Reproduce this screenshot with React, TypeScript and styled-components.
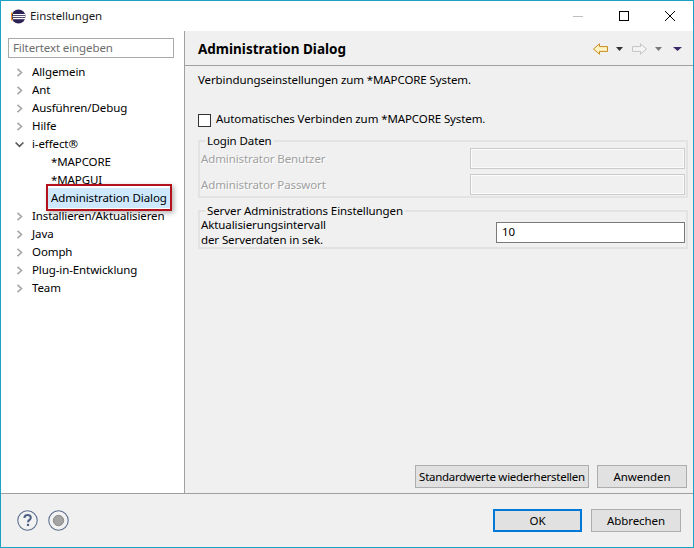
import styled, { createGlobalStyle } from "styled-components";

const UI_FONT = `"Noto Sans", "Open Sans", "Liberation Sans", sans-serif`;

const GlobalStyle = createGlobalStyle`
  html, body {
    margin: 0;
    padding: 0;
    background: #ffffff;
  }
  * {
    box-sizing: border-box;
  }
`;

const TREE = [
  { label: "Allgemein", indent: 0, arrow: "right" },
  { label: "Ant", indent: 0, arrow: "right" },
  { label: "Ausführen/Debug", indent: 0, arrow: "right" },
  { label: "Hilfe", indent: 0, arrow: "right" },
  { label: "i-effect®", indent: 0, arrow: "down" },
  { label: "*MAPCORE", indent: 1, arrow: "none" },
  { label: "*MAPGUI", indent: 1, arrow: "none" },
  { label: "Administration Dialog", indent: 1, arrow: "none", selected: true },
  { label: "Installieren/Aktualisieren", indent: 0, arrow: "right" },
  { label: "Java", indent: 0, arrow: "right" },
  { label: "Oomph", indent: 0, arrow: "right" },
  { label: "Plug-in-Entwicklung", indent: 0, arrow: "right" },
  { label: "Team", indent: 0, arrow: "right" },
];

function Chevron({ dir }: { dir: string }) {
  if (dir === "none") return <ChevronSlot />;
  return (
    <ChevronSlot>
      <svg width="9" height="9" viewBox="0 0 9 9" fill="none">
        {dir === "right" ? (
          <path d="M2.5 0.8 L6.5 4.5 L2.5 8.2" stroke="#a6a6a6" strokeWidth="1.6" />
        ) : (
          <path d="M0.6 2.5 L4.5 6.3 L8.4 2.5" stroke="#555555" strokeWidth="1.6" />
        )}
      </svg>
    </ChevronSlot>
  );
}

function EclipseLogo() {
  return (
    <svg width="15" height="15" viewBox="0 0 15 15">
      <circle cx="7.5" cy="7.5" r="7" fill="#2c2255" />
      <path d="M1.2 3.6 A7 7 0 0 0 1.2 11.4" stroke="#f7941e" strokeWidth="1.6" fill="none" />
      <rect x="2" y="5" width="12" height="1.2" fill="#ffffff" />
      <rect x="1.6" y="7" width="12.8" height="1.2" fill="#ffffff" />
      <rect x="2" y="9" width="12" height="1.2" fill="#ffffff" />
    </svg>
  );
}

function WindowControls() {
  return (
    <Controls>
      <ControlSlot>
        <svg width="10" height="10" viewBox="0 0 10 10">
          <rect x="0" y="5" width="10" height="1" fill="#bfbfbf" />
        </svg>
      </ControlSlot>
      <ControlSlot>
        <svg width="10" height="10" viewBox="0 0 10 10">
          <rect x="0.5" y="0.5" width="9" height="9" fill="none" stroke="#000000" />
        </svg>
      </ControlSlot>
      <ControlSlot>
        <svg width="10" height="10" viewBox="0 0 10 10">
          <path d="M0 0 L10 10 M10 0 L0 10" stroke="#000000" strokeWidth="1" />
        </svg>
      </ControlSlot>
    </Controls>
  );
}

function NavArrow({ back }: { back?: boolean }) {
  const d = "M0.5 6 L6.5 0.8 L6.5 3.6 L14.5 3.6 L14.5 8.4 L6.5 8.4 L6.5 11.2 Z";
  return (
    <svg width="15" height="12" viewBox="0 0 15 12">
      <path
        d={d}
        transform={back ? undefined : "matrix(-1 0 0 1 15 0)"}
        fill={back ? "#fff3c4" : "#f4f4f4"}
        stroke={back ? "#c98a1e" : "#c4c4c4"}
        strokeWidth="1"
      />
    </svg>
  );
}

function Caret({ color, width = 7 }: { color: string; width?: number }) {
  return (
    <svg width={width} height="4" viewBox={`0 0 ${width} 4`}>
      <path d={`M0 0 L${width} 0 L${width / 2} 4 Z`} fill={color} />
    </svg>
  );
}

function HelpIcon() {
  return (
    <svg width="21" height="21" viewBox="0 0 21 21">
      <circle cx="10.5" cy="10.5" r="9.7" fill="#f2f2f2" stroke="#5b6f8f" strokeWidth="1.1" />
      <path
        d="M7.4 8 C7.4 5.8 9 5 10.6 5 C12.4 5 13.8 6 13.8 7.7 C13.8 9.8 11 10 11 12.3"
        fill="none"
        stroke="#4d6185"
        strokeWidth="2"
      />
      <rect x="9.9" y="13.8" width="2.2" height="2.2" fill="#4d6185" />
    </svg>
  );
}

function RecordIcon() {
  return (
    <svg width="21" height="21" viewBox="0 0 21 21">
      <circle cx="10.5" cy="10.5" r="9.7" fill="#f2f2f2" stroke="#5b6f8f" strokeWidth="1.1" />
      <circle cx="10.5" cy="10.5" r="5.2" fill="#a3a3a3" stroke="#8c8c8c" />
    </svg>
  );
}

export default function App() {
  return (
    <>
      <GlobalStyle />
      <Window>
        <TitleBar>
          <TitleLogo>
            <EclipseLogo />
          </TitleLogo>
          <TitleText>Einstellungen</TitleText>
          <WindowControls />
        </TitleBar>

        <Body>
          <Sidebar>
            <FilterInput placeholder="Filtertext eingeben" readOnly />
            <Tree>
              {TREE.map((item) => (
                <TreeRow key={item.label} $indent={item.indent}>
                  <Chevron dir={item.arrow} />
                  <TreeLabel $selected={item.selected}>{item.label}</TreeLabel>
                  {item.selected && <Callout />}
                </TreeRow>
              ))}
            </Tree>
          </Sidebar>

          <Main>
            <Header>
              <HeaderTitle>Administration Dialog</HeaderTitle>
              <HeaderTools>
                <ToolPair>
                  <NavArrow back />
                  <Caret color="#333333" />
                </ToolPair>
                <ToolPair>
                  <NavArrow />
                  <Caret color="#7a7a7a" />
                </ToolPair>
                <ViewMenu>
                  <Caret color="#3b2a6b" width={9} />
                </ViewMenu>
              </HeaderTools>
            </Header>

            <Content>
              <Description>Verbindungseinstellungen zum *MAPCORE System.</Description>

              <CheckRow>
                <CheckBox />
                <CheckText>Automatisches Verbinden zum *MAPCORE System.</CheckText>
              </CheckRow>

              <LoginGroup>
                <GroupLegend>Login Daten</GroupLegend>
                <FieldRow>
                  <DisabledLabel>Administrator Benutzer</DisabledLabel>
                  <DisabledField />
                </FieldRow>
                <FieldRow>
                  <DisabledLabel>Administrator Passwort</DisabledLabel>
                  <DisabledField />
                </FieldRow>
              </LoginGroup>

              <ServerGroup>
                <GroupLegend>Server Administrations Einstellungen</GroupLegend>
                <ServerRow>
                  <ServerLabel>
                    Aktualisierungsintervall
                    <br />
                    der Serverdaten in sek.
                  </ServerLabel>
                  <ValueField>10</ValueField>
                </ServerRow>
              </ServerGroup>

              <PageActions>
                <Button $width={174} $tight>
                  Standardwerte wiederherstellen
                </Button>
                <Button $width={90}>Anwenden</Button>
              </PageActions>
            </Content>
          </Main>
        </Body>

        <Footer>
          <FooterIcons>
            <HelpIcon />
            <RecordIcon />
          </FooterIcons>
          <DialogActions>
            <Button $width={89} $primary>
              OK
            </Button>
            <Button $width={90}>Abbrechen</Button>
          </DialogActions>
        </Footer>
      </Window>
    </>
  );
}

const Window = styled.div`
  display: flex;
  flex-direction: column;
  width: 694px;
  height: 548px;
  overflow: hidden;
  border: 1px solid #18a3c4;
  background: #ffffff;
  color: #000000;
  font-family: ${UI_FONT};
  font-size: 11.5px;
  line-height: 16px;
  letter-spacing: -0.1px;
`;

const TitleBar = styled.div`
  display: flex;
  align-items: center;
  flex: none;
  height: 30px;
  background: #ffffff;
`;

const TitleLogo = styled.div`
  display: flex;
  margin-left: 10px;
`;

const TitleText = styled.div`
  margin-left: 4px;
  color: #1a1a1a;
`;

const Controls = styled.div`
  display: flex;
  margin-left: auto;
`;

const ControlSlot = styled.div`
  display: flex;
  align-items: center;
  justify-content: center;
  width: 46px;
  height: 30px;
`;

const Body = styled.div`
  display: flex;
  flex: 1;
  min-height: 0;
`;

const Sidebar = styled.div`
  flex: none;
  width: 184px;
  padding: 7px 0 0 7px;
  border-right: 1px solid #a0a0a0;
  background: #ffffff;
`;

const FilterInput = styled.input`
  display: block;
  width: 166px;
  height: 20px;
  padding: 0 4px 2px;
  border: 1px solid #a9a9a9;
  outline: none;
  font-family: inherit;
  font-size: 11.5px;
  letter-spacing: -0.1px;
  color: #6d6d6d;

  &::placeholder {
    color: #6d6d6d;
    opacity: 1;
  }
`;

const Tree = styled.div`
  margin-top: 5px;
`;

const TreeRow = styled.div<{ $indent: number }>`
  position: relative;
  display: flex;
  align-items: center;
  height: 18px;
  padding-left: ${(p) => (p.$indent ? 37 : 7)}px;
`;

const ChevronSlot = styled.div`
  display: flex;
  flex: none;
  align-items: center;
  width: 16px;

  &:empty {
    width: 5px;
  }
`;

const TreeLabel = styled.span<{ $selected?: boolean }>`
  position: relative;
  padding: ${(p) => (p.$selected ? "2px 4px" : "0 1px")};
  margin-left: ${(p) => (p.$selected ? "-3px" : "0")};
  white-space: nowrap;
  background: ${(p) => (p.$selected ? "#cde8ff" : "transparent")};
`;

const Callout = styled.div`
  position: absolute;
  top: -5px;
  left: 38px;
  width: 126px;
  height: 27px;
  border: 2px solid #b3121d;
  box-shadow: 2px 2px 5px rgba(0, 0, 0, 0.3);
  pointer-events: none;
`;

const Main = styled.div`
  display: flex;
  flex: 1;
  flex-direction: column;
  min-width: 0;
  background: #f0f0f0;
`;

const Header = styled.div`
  display: flex;
  flex: none;
  align-items: center;
  height: 35px;
  padding: 2px 11px 0 13px;
  border-bottom: 1px solid #a0a0a0;
`;

const HeaderTitle = styled.div`
  font-size: 13.5px;
  font-weight: 700;
  letter-spacing: 0;
`;

const HeaderTools = styled.div`
  display: flex;
  align-items: center;
  gap: 9px;
  margin-left: auto;
`;

const ToolPair = styled.div`
  display: flex;
  align-items: center;
  gap: 8px;
`;

const ViewMenu = styled.div`
  display: flex;
  margin-left: 2px;
`;

const Content = styled.div`
  display: flex;
  flex: 1;
  flex-direction: column;
  padding: 6px 5px 5px 13px;
`;

const Description = styled.div``;

const CheckRow = styled.label`
  display: flex;
  align-items: center;
  gap: 5px;
  height: 16px;
  margin-top: 24px;
`;

const CheckText = styled.span`
  margin-top: -2px;
`;

const CheckBox = styled.div`
  flex: none;
  width: 13px;
  height: 13px;
  border: 1px solid #333333;
  background: #ffffff;
`;

const Group = styled.fieldset`
  margin: 0;
  min-width: 0;
  border: 2px solid #e3e3e3;
`;

const LoginGroup = styled(Group)`
  margin-top: 6px;
  padding: 0 1px 1px 1px;
`;

const ServerGroup = styled(Group)`
  margin-top: 6px;
  padding: 0 1px;
`;

const GroupLegend = styled.legend`
  margin-left: 4px;
  padding: 0 2px;
  line-height: 14px;
`;

const FieldRow = styled.div`
  display: flex;
  align-items: center;
  justify-content: space-between;
  height: 21px;
  margin-bottom: 5px;

  &:last-child {
    margin-bottom: 0;
  }
`;

const DisabledLabel = styled.span`
  color: #a0a0a0;
  text-shadow: 1px 1px 0 #ffffff;
`;

const DisabledField = styled.div`
  width: 215px;
  height: 21px;
  border: 1px solid #cccccc;
  background: #f0f0f0;
  box-shadow: inset 0 0 0 1px #fbfbfb;
`;

const ServerRow = styled.div`
  display: flex;
  align-items: center;
  justify-content: space-between;
  margin-top: -1px;
`;

const ServerLabel = styled.div`
  line-height: 15px;
`;

const ValueField = styled.div`
  width: 189px;
  height: 21px;
  padding: 1px 5px;
  border: 1px solid #7a7a7a;
  background: #ffffff;
`;

const PageActions = styled.div`
  display: flex;
  justify-content: flex-end;
  gap: 8px;
  margin-top: auto;
  padding-right: 1px;
`;

const Button = styled.div<{ $width: number; $primary?: boolean; $tight?: boolean }>`
  display: flex;
  align-items: center;
  justify-content: center;
  width: ${(p) => p.$width}px;
  height: 23px;
  border: ${(p) => (p.$primary ? "2px solid #0078d7" : "1px solid #adadad")};
  background: #e1e1e1;
  white-space: nowrap;
  letter-spacing: ${(p) => (p.$tight ? "-0.27px" : "inherit")};
`;

const Footer = styled.div`
  display: flex;
  flex: none;
  align-items: center;
  height: 54px;
  padding: 0 12px 0 16px;
  border-top: 1px solid #a0a0a0;
  background: #f0f0f0;
`;

const FooterIcons = styled.div`
  display: flex;
  gap: 10px;
`;

const DialogActions = styled.div`
  display: flex;
  gap: 9px;
  margin-left: auto;
`;
